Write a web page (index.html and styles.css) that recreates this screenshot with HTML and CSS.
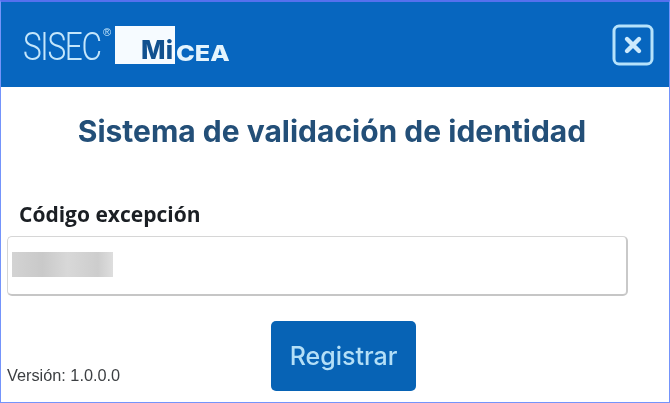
FILE: index.html
```html
<!DOCTYPE html>
<html lang="es">
<head>
<meta charset="utf-8">
<title>Sistema de validación de identidad</title>
<link rel="stylesheet" href="styles.css">
</head>
<body>
<div class="window">
  <header class="header">
    <div class="logo">
      <span class="sisec">SISEC</span><span class="reg">®</span>
      <span class="mi-box"><span class="mi">Mi</span></span>
      <span class="cea">CEA</span>
    </div>
    <button class="close" aria-label="Cerrar">
      <svg viewBox="0 0 42 42" width="42" height="42" aria-hidden="true">
        <rect x="2" y="2" width="38" height="38" rx="5" fill="none" stroke="#b5e2fb" stroke-width="3"/>
        <path d="M15 15 L27 27 M27 15 L15 27" fill="none" stroke="#cdeafc" stroke-width="4.4" stroke-linecap="round"/>
      </svg>
    </button>
  </header>
  <main class="content">
    <h1 class="title">Sistema de validación de identidad</h1>
    <label class="label">Código excepción</label>
    <div class="input"><span class="redacted"></span></div>
    <div class="footer">
      <span class="version">Versión: 1.0.0.0</span>
      <button class="submit">Registrar</button>
    </div>
  </main>
</div>
</body>
</html>
```
FILE: styles.css
```css
* { box-sizing: border-box; }
html, body { margin: 0; padding: 0; }
body { width: 670px; height: 403px; overflow: hidden; background: #fff; }
.window {
  width: 670px;
  height: 403px;
  border: 1px solid #7494fb;
  border-top: 2px solid #5570ee;
  background: #fff;
  display: flex;
  flex-direction: column;
}
.header {
  height: 85px;
  flex: none;
  background: #0766bf;
  display: flex;
  align-items: center;
  justify-content: space-between;
  padding: 0 15px 0 22px;
}
.logo { display: flex; align-items: flex-start; height: 38px; color: #c4e6fb; filter: blur(0.4px); }
.sisec {
  font: 300 38px/1 "Roboto", sans-serif;
  letter-spacing: -1.6px;
  margin-top: 2px;
  width: 80px;
  transform: scaleX(0.83);
  transform-origin: left;
}
.reg { font: 400 11px/1 "Liberation Sans", sans-serif; margin-top: 1px; width: 12px; color: #c4e6fb; }
.mi-box {
  width: 60px;
  height: 38px;
  background: #f6fbff;
  display: flex;
  align-items: flex-end;
  justify-content: flex-end;
  padding: 0 2px 0 0;
}
.mi { font: 800 26px/28px "Inter", "Liberation Sans", sans-serif; color: #12518f; }
.cea {
  font: 800 22px/1 "Inter", "Liberation Sans", sans-serif;
  color: #e4f4fd;
  margin: 16px 0 0 1px;
  transform: scaleX(1.15);
  transform-origin: left;
}
.close { width: 42px; height: 42px; padding: 0; border: 0; background: none; display: block; filter: blur(0.4px); }
.close svg { display: block; }
.content { flex: 1; display: flex; flex-direction: column; padding: 0 41px 11px 6px; min-height: 0; filter: blur(0.4px); }
.title {
  margin: 26px -29px 0 0;
  font: 700 30px/36px "Inter", "Liberation Sans", sans-serif;
  color: #234f78;
  text-align: center;
}
.label {
  margin: 51px 0 0 12px;
  font: 700 21px/28px "Open Sans", sans-serif;
  color: #1b1f24;
}
.input {
  margin-top: 8px;
  height: 60px;
  width: 621px;
  background: #fff;
  border: 1px solid #d6d6d6;
  border-right: 2px solid #c9c9c9;
  border-bottom: 2px solid #c6c6c6;
  border-radius: 5px;
  display: flex;
  align-items: center;
  padding: 0 0 2px 4px;
}
.redacted {
  width: 101px;
  height: 25px;
  background: linear-gradient(90deg, #d3d3d3 0%, #c9c9c9 30%, #d8d8d8 55%, #cdcdcd 85%, #dedede 100%);
}
.footer { flex: 1; display: flex; align-items: flex-end; min-height: 0; }
.version { font: 400 16.3px/18px "Liberation Sans", sans-serif; color: #3c3f42; margin-bottom: 7px; width: 264px; }
.submit {
  width: 145px;
  height: 70px;
  border: 0;
  border-radius: 5px;
  background: #0763b5;
  color: #b3dff7;
  font: 500 25px/1 "Inter", "Liberation Sans", sans-serif;
  padding: 0;
}
```
